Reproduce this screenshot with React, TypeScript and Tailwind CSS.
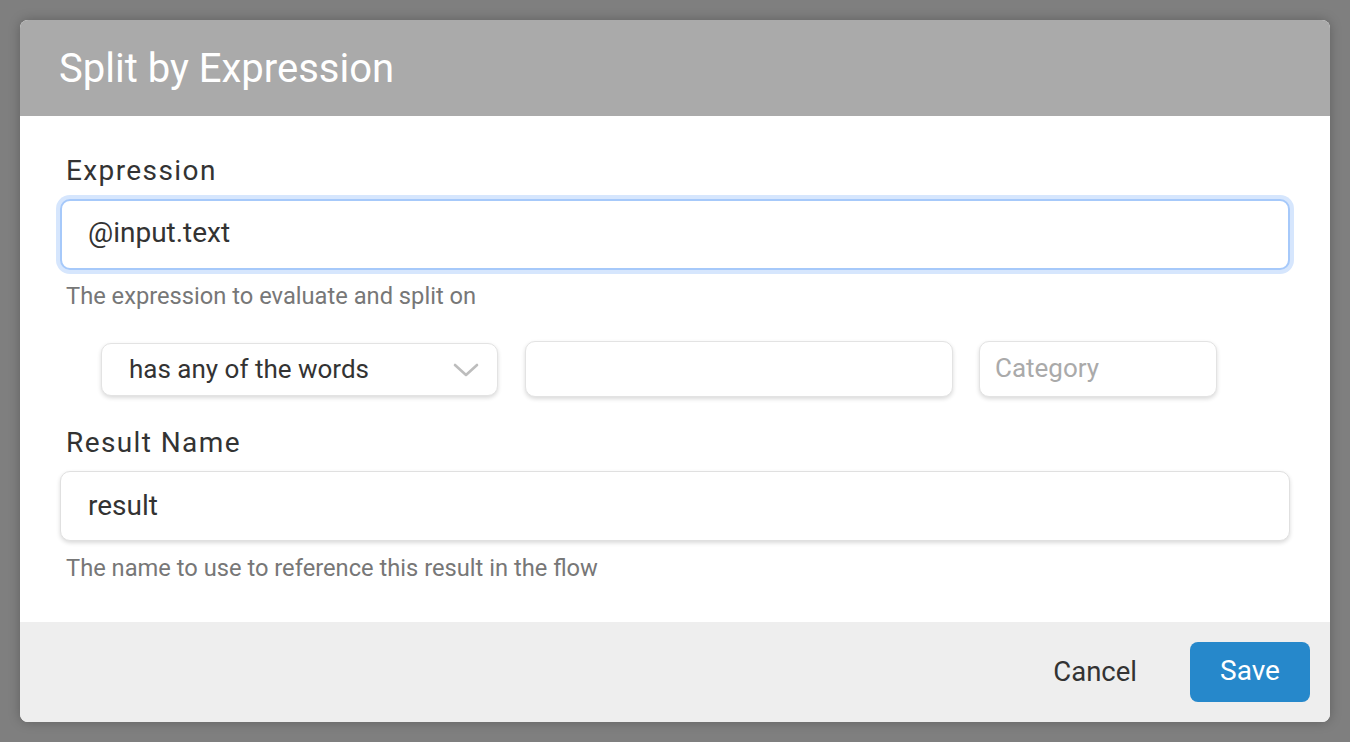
import React from "react";

const font = { fontFamily: "Roboto, 'Noto Sans', sans-serif" };

export default function App() {
  return (
    <div
      className="w-[1350px] h-[742px] bg-[#7f7f7f] p-5 box-border"
      style={font}
    >
      <div className="w-[1310px] h-[702px] rounded-lg overflow-hidden bg-white flex flex-col shadow-[0_0_12px_rgba(0,0,0,0.25)]">
        {/* Header */}
        <div className="h-[96px] shrink-0 bg-[#aaaaaa] flex items-center pl-[39px]">
          <h1 className="text-[40px] leading-[48px] text-white font-normal pt-[2px]">
            Split by Expression
          </h1>
        </div>

        {/* Body */}
        <div className="flex-1 flex flex-col pl-10 pr-10 pt-[39px]">
          <label className="ml-[6px] text-[28px] leading-[32px] tracking-[1.4px] text-[#333333]">
            Expression
          </label>
          <div className="mt-[12px] h-[71px] w-[1230px] rounded-[10px] border-2 border-[#a6c9fa] ring-4 ring-[#d6e6fd] bg-white flex items-center pl-[26px] pb-[3px]">
            <span className="text-[28px] text-[#333333]">@input.text</span>
          </div>
          <p className="mt-[12px] ml-[6px] text-[23.7px] leading-[28px] text-[#777777]">
            The expression to evaluate and split on
          </p>

          <div className="mt-[31px] ml-[41px] flex items-end h-[56px]">
            <div className="w-[397px] h-[53px] mb-[1px] rounded-[10px] border border-[#e3e3e3] shadow-[0_2px_4px_rgba(0,0,0,0.15)] bg-white flex items-center justify-between pl-[27px] pr-[18px]">
              <span className="text-[26px] text-[#333333]">has any of the words</span>
              <svg width="26" height="14" viewBox="0 0 26 14" fill="none">
                <path
                  d="M2 2 L13 12 L24 2"
                  stroke="#bdbdbd"
                  strokeWidth="2.6"
                  strokeLinecap="round"
                  strokeLinejoin="round"
                />
              </svg>
            </div>
            <div className="ml-[27px] w-[428px] h-[56px] rounded-[10px] border border-[#e3e3e3] shadow-[0_2px_4px_rgba(0,0,0,0.15)] bg-white" />
            <div className="ml-[26px] w-[238px] h-[56px] rounded-[10px] border border-[#e3e3e3] shadow-[0_2px_4px_rgba(0,0,0,0.15)] bg-white flex items-center pl-[15px] pb-[2px]">
              <span className="text-[26px] text-[#aaaaaa]">Category</span>
            </div>
          </div>

          <label className="mt-[30px] ml-[6px] text-[28px] leading-[32px] tracking-[1.4px] text-[#333333]">
            Result Name
          </label>
          <div className="mt-[12px] h-[70px] w-[1230px] rounded-[10px] border border-[#e0e0e0] shadow-[0_2px_4px_rgba(0,0,0,0.15)] bg-white flex items-center pl-[27px]">
            <span className="text-[28px] text-[#333333]">result</span>
          </div>
          <p className="mt-[13px] ml-[6px] text-[23.7px] leading-[28px] text-[#777777]">
            The name to use to reference this result in the flow
          </p>
        </div>

        {/* Footer */}
        <div className="h-[100px] shrink-0 bg-[#eeeeee] flex items-center justify-end pr-5">
          <button className="text-[27.5px] text-[#333333] mr-[53px]">Cancel</button>
          <button className="w-[120px] h-[60px] rounded-lg bg-[#2688cb] text-white text-[28px] pb-[2px]">
            Save
          </button>
        </div>
      </div>
    </div>
  );
}
